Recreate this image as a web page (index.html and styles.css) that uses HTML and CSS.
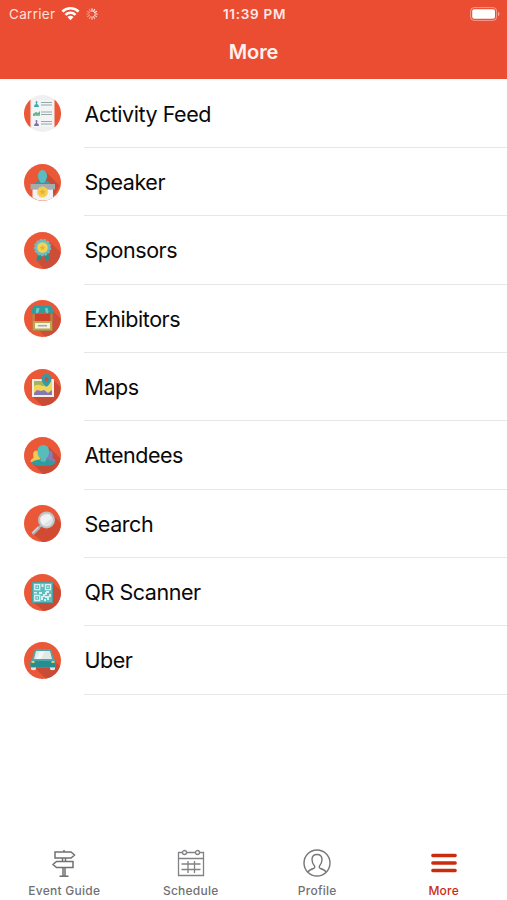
FILE: index.html
```html
<!DOCTYPE html>
<html lang="en">
<head>
    <meta charset="UTF-8">
    <meta name="viewport" content="width=device-width, initial-scale=1.0">
    <title>More</title>
    <link rel="stylesheet" href="styles.css">
</head>
<body>
    <header class="header">
        <div class="status-bar">
            <div class="carrier">
                <span>Carrier</span>
                <svg class="wifi" viewBox="0 0 20 15" fill="none" stroke="#fff" stroke-width="2.8">
                    <path d="M1.5 5.5a12 12 0 0 1 17 0M4.7 8.9a7.5 7.5 0 0 1 10.6 0"/>
                    <path d="M10 14.5L6.8 11.3a4.6 4.6 0 0 1 6.4 0z" fill="#fff" stroke="none"/>
                </svg>
                <svg class="spinner" viewBox="0 0 12 12" stroke="#fff" stroke-width="1.2" stroke-linecap="round">
                    <path d="M6 .8v2.4M8.6 1.5L7.5 3.4M10.5 3.4l-1.9 1.1M11.2 6H8.8" opacity=".9"/>
                    <path d="M10.5 8.6L8.6 7.5M8.6 10.5L7.5 8.6M6 11.2V8.8" opacity=".7"/>
                    <path d="M3.4 10.5l1.1-1.9M1.5 8.6l1.9-1.1M.8 6h2.4M1.5 3.4l1.9 1.1M3.4 1.5l1.1 1.9" opacity=".4"/>
                </svg>
            </div>
            <div class="time">11:39 PM</div>
            <svg class="battery" viewBox="0 0 30 14">
                <rect x=".6" y=".6" width="26" height="12.8" rx="3.5" fill="none" stroke="#fff" stroke-opacity=".45"/>
                <rect x="2.2" y="2.2" width="22.8" height="9.6" rx="2" fill="#fff"/>
                <path d="M28 4.8c2 .8 2 3.6 0 4.4z" fill="#fff" opacity=".5"/>
            </svg>
        </div>
        <h1 class="title">More</h1>
    </header>

    <ul class="menu">
        <li class="menu-item">
            <svg class="icon" viewBox="0 0 37 37">
                <circle cx="18.5" cy="18.5" r="18.5" fill="#f0f0f2"/>
                <path d="M6.5 4.4a18.5 18.5 0 0 0 0 28.2zM30.5 4.4a18.5 18.5 0 0 1 0 28.2z" fill="#eb5838"/>
                <path d="M8 5h21v27H8z" fill="#f3f4f6"/>
                <path d="M17 7.5h11M17 10h11M17 17h11M17 19.500h11M17 26.500h11M17 29h11" stroke="#93aaa8" stroke-width="1.2"/>
                <path d="M10 12q0-2.5 2-3-1-3 .5-3t.5 3q2 .5 2 3z" fill="#3cacae"/>
                <path d="M9 21v-2l3-2 2 1 2-2v5z" fill="#4fb5a0"/>
                <path d="M9 21l3-2 2 1 2-1v2z" fill="#a5c64f"/>
                <path d="M10 31q0-2.5 2-3-1-3 .5-3t.5 3q2 .5 2 3z" fill="#7d70ad"/>
            </svg>
            <span class="label">Activity Feed</span>
        </li>
        <li class="menu-item">
            <svg class="icon" viewBox="0 0 37 37">
                <circle cx="18.5" cy="18.5" r="18.5" fill="#eb5838"/>
                <path d="M21 7l14.5 14.5-5 9-14-12z" fill="#c94a35"/>
                <path d="M10.5 20q0-3 6-4h4q6 1 6 4z" fill="#40969b"/>
                <ellipse cx="18.5" cy="12" rx="4.6" ry="6" fill="#57bdc3"/>
                <path d="M16 15h5v3q-2.5 2-5 0z" fill="#57bdc3"/>
                <path d="M6.5 20H31v5.500H6.5z" fill="#a7abad"/>
                <path d="M8.5 25.500H29v8.200a18.5 18.5 0 0 1-20.500 0z" fill="#f1f2f3"/>
                <circle cx="18.5" cy="28" r="5.2" fill="#f5cd4d" stroke="#f7d866" stroke-dasharray="1.5 1"/>
                <path d="M18.5 25l1 2 2 .2-1.500 1.500.4 2-1.900-1-1.900 1 .4-2-1.500-1.500 2-.2z" fill="#e5b13c"/>
            </svg>
            <span class="label">Speaker</span>
        </li>
        <li class="menu-item">
            <svg class="icon" viewBox="0 0 37 37">
                <circle cx="18.5" cy="18.5" r="18.5" fill="#eb5838"/>
                <path d="M26 10l10.700 10.500A18.5 18.5 0 0 1 20 37l-7-8 9-10z" fill="#cc4d38"/>
                <path d="M14 21l4 2-2 6-2-1-2 1zM20 23l4-2 2 8-2-1-2 1z" fill="#298f8e"/>
                <circle cx="18.5" cy="15.5" r="7.7" fill="#6abfc3" stroke="#6abfc3" stroke-width="2" stroke-dasharray="2.5 1.2"/>
                <circle cx="18.5" cy="15.5" r="5.3" fill="#f5d352"/>
                <path d="M18.5 13l.8 1.700 1.900.2-1.400 1.300.4 1.900-1.700-.9-1.700.9.4-1.900-1.400-1.300 1.900-.2z" fill="#e5ad3e"/>
            </svg>
            <span class="label">Sponsors</span>
        </li>
        <li class="menu-item">
            <svg class="icon" viewBox="0 0 37 37">
                <circle cx="18.5" cy="18.5" r="18.5" fill="#eb5838"/>
                <path d="M27 9l9.900 10A18.5 18.5 0 0 1 21 36.800L15 30z" fill="#cc4d38"/>
                <path d="M9.500 13v17h18V13" fill="none" stroke="#a78c46" stroke-width="2"/>
                <path d="M11 14h15v7H11z" fill="#cf4229"/>
                <path d="M9 21h19v9H9z" fill="#b9a64f"/>
                <path d="M11 23h15v5.500H11z" fill="#f5f1e7"/>
                <path d="M14 25.700h9" stroke="#98a9ac" stroke-width="1.5"/>
                <path d="M9.500 6h18l2 6q-.5 2-2.300 2T25 12q-.5 2-2.200 2t-2.200-2q-.5 2-2.200 2t-2.200-2q-.5 2-2.200 2t-2.200-2q-.5 2-2.200 2T7 12z" fill="#2b9e9f"/>
                <path d="M12.500 8l-.8 4q1 2.500 3 0l.8-4zM21 8l.5 4q1.500 2.500 3 0l-.8-4z" fill="#71c8c5"/>
            </svg>
            <span class="label">Exhibitors</span>
        </li>
        <li class="menu-item">
            <svg class="icon" viewBox="0 0 37 37">
                <circle cx="18.5" cy="18.5" r="18.5" fill="#eb5838"/>
                <path d="M29 11l7.500 7.500A18.5 18.5 0 0 1 18.500 37L9 28z" fill="#c94a35"/>
                <path d="M8 10h22v18H8z" fill="#f3efe8"/>
                <path d="M10 12h18v14H10z" fill="#f4d45b"/>
                <path d="M10 12h15v4q-6 2-9 0-3-1-6 1z" fill="#a8b45a"/>
                <path d="M10 24l3-3 4 1 3-1 4 3 4-3v5H10z" fill="#8279b7"/>
                <path d="M22.500 18q-5-4.500-5-8a5 5 0 0 1 10 0q0 3.500-5 8z" fill="#339ca1"/>
                <circle cx="22.500" cy="10" r="2" fill="#cf503f"/>
            </svg>
            <span class="label">Maps</span>
        </li>
        <li class="menu-item">
            <svg class="icon" viewBox="0 0 37 37">
                <circle cx="18.5" cy="18.5" r="18.5" fill="#eb5838"/>
                <path d="M25 10l11.500 11.500A18.5 18.5 0 0 1 19 37L9 27z" fill="#c94a35"/>
                <path d="M6.500 25q0-3 3-4-1.500-7 2.500-7.500 4.500 0 4.500 6l-1 5.500z" fill="#f2c94d"/>
                <path d="M31.500 25q0-3-3-4 1.500-7-2.500-7.500-4.500 0-4.500 6l1 5.500z" fill="#887bb5"/>
                <path d="M7 26.500q1-3 8-4h7.500q8 1 9 4-4 2.500-12 2.500T7 26.500z" fill="#319c9e"/>
                <path d="M19.300 8q5.700 0 5.700 6.500 0 4.500-3 7v2.500q-2.700 1.500-5.500 0v-2.500q-3-2.500-3-7 0-6.500 5.800-6.500z" fill="#57bdbb"/>
            </svg>
            <span class="label">Attendees</span>
        </li>
        <li class="menu-item">
            <svg class="icon" viewBox="0 0 37 37">
                <circle cx="18.5" cy="18.5" r="18.5" fill="#eb5838"/>
                <path d="M29 10l8 8A18.5 18.5 0 0 1 19 37l-10-8 10-9z" fill="#d14a31"/>
                <path d="M17.500 20L14 23.500" stroke="#b6b9b9" stroke-width="2"/>
                <path d="M14.500 23L9.500 28" stroke="#a9acad" stroke-width="3.5" stroke-linecap="round"/>
                <path d="M14 22.500L9 27.500" stroke="#d9dcdc" stroke-width="1.2" stroke-linecap="round"/>
                <circle cx="22.500" cy="15" r="7.5" fill="#e1e4e5" stroke="#bec1c1" stroke-width="2"/>
                <path d="M17 12l8-3 3 4-9 7q-3-3-2-8z" fill="#f0f2f3"/>
            </svg>
            <span class="label">Search</span>
        </li>
        <li class="menu-item">
            <svg class="icon" viewBox="0 0 37 37">
                <circle cx="18.5" cy="18.5" r="18.5" fill="#eb5838"/>
                <path d="M29 9l7.900 8A18.5 18.5 0 0 1 20 37L9 28z" fill="#c94a35"/>
                <path d="M8.500 8.500h20v20h-20z" fill="#60bdbe" stroke="#48a2a4"/>
                <path d="M10.700 10.700h5v5h-5zM21.500 10.700h5v5h-5zM10.700 21.500h5v5h-5z" fill="none" stroke="#daf0ef" stroke-width="1.300"/>
                <path d="M12.500 12.500H14V14h-1.500zM23.200 12.500h1.500V14h-1.500zM12.500 23.200H14v1.500h-1.500zM17.500 10h2v3h-2zM22 17h3v2h-2v2h-2v2h-2v3h-2v-4h2v-2h2v-2h1zM25 20h2v3h-2v3h-2v-2h-2v-2h4zM10 18h3v1.500h-3zM15 18h3v2h-3zM20 25h2v2h-2z" fill="#daf0ef"/>
            </svg>
            <span class="label">QR Scanner</span>
        </li>
        <li class="menu-item">
            <svg class="icon" viewBox="0 0 37 37">
                <circle cx="18.5" cy="18.5" r="18.5" fill="#eb5838"/>
                <path d="M31 20l5 4A18.5 18.5 0 0 1 22 36.700L10 25z" fill="#c94a35"/>
                <path d="M7 24h5v3.500q-2.500 1.500-5 0zM26 24h5v3.500q-2.500 1.500-5 0z" fill="#dfe5e5"/>
                <path d="M12 7h14q1 0 1.500 2l2.500 8q1.500 1 1.500 3v4.500q0 1-1 1h-23q-1 0-1-1V20q0-2 1.500-3L10.500 9q.5-2 1.500-2z" fill="#48a6ac"/>
                <path d="M6.500 19h25v5q0 1-1 1h-23q-1 0-1-1z" fill="#248e92"/>
                <path d="M12.500 9h13q.5 0 1 2l1.500 6H10l1.500-6q.5-2 1-2z" fill="#e3e7e7"/>
                <path d="M16 9h5l-4 8h-5z" fill="#f4f5f5"/>
                <path d="M7.500 19h3v2h-3zM27.500 19h3v2h-3z" fill="#e4d05c"/>
            </svg>
            <span class="label">Uber</span>
        </li>
    </ul>

    <nav class="tab-bar">
        <a class="tab">
            <svg class="tab-icon" viewBox="0 0 28 28" fill="none" stroke="#707073" stroke-width="1.5">
                <path d="M5 3h16l3.500 3L21 9H5zM23 12.500H6.500l-3.500 3 3.500 3H23zM12.500 9v3.500M15.500 9v3.500M13 18.500V27M15 18.500V27M9.500 27.300h9"/>
                <path d="M14 1v2"/>
            </svg>
            <span>Event Guide</span>
        </a>
        <a class="tab">
            <svg class="tab-icon" viewBox="0 0 28 28" fill="none" stroke="#828285" stroke-width="1.300">
                <path d="M5.500 3.500h-4v23h25v-23h-4M9.500 3.500h9M1.500 9.500h25M4.500 15h19M4.500 20.500h19M11 12v12M17.500 12v12"/>
                <circle cx="7.5" cy="3.5" r="2"/>
                <circle cx="20.500" cy="3.500" r="2"/>
            </svg>
            <span>Schedule</span>
        </a>
        <a class="tab">
            <svg class="tab-icon" viewBox="0 0 28 28" fill="none" stroke="#77777a" stroke-width="1.400">
                <circle cx="14" cy="14" r="13"/>
                <path d="M5 23q1-2 5.500-3.500 1.800-.7 1-2.500Q9 14 9 10.500 9 5.500 14 5.500t5 5q0 3.500-2.500 6.500-.8 1.800 1 2.500Q22 21 23 23"/>
            </svg>
            <span>Profile</span>
        </a>
        <a class="tab active">
            <svg class="tab-icon" viewBox="0 0 28 28" stroke="#ca2c0e" stroke-width="3.3" stroke-linecap="round">
                <path d="M2.800 6.500h22.400M2.800 14h22.400M2.800 21.500h22.400"/>
            </svg>
            <span>More</span>
        </a>
    </nav>
</body>
</html>
```
FILE: styles.css
```css
* {
    box-sizing: border-box;
}
body {
    margin: 0;
    height: 100vh;
    display: flex;
    flex-direction: column;
    background: #fff;
    color: #090909;
    font-family: Inter, "Liberation Sans", sans-serif;
    overflow: hidden;
}
.header {
    height: 79px;
    flex-shrink: 0;
    background: #eb4d32;
    color: #fff;
}
.status-bar {
    height: 27px;
    padding: 0 7px 0 9px;
    display: grid;
    grid-template-columns: 1fr auto 1fr;
    align-items: center;
    font-size: 13.5px;
}
.carrier {
    display: flex;
    align-items: center;
    gap: 6px;
    color: #ffe0d9;
    letter-spacing: 0.3px;
}
.wifi {
    width: 19px;
    height: 15px;
}
.spinner {
    width: 12px;
    height: 12px;
}
.time {
    font-weight: 600;
    font-size: 13.5px;
    color: #ffeae5;
    letter-spacing: 0.7px;
}
.battery {
    width: 30px;
    height: 14px;
    justify-self: end;
}
.title {
    margin: 0;
    line-height: 51px;
    text-align: center;
    font-size: 20px;
    font-weight: 600;
    letter-spacing: -0.1px;
    color: #fff1ed;
}
.menu {
    list-style: none;
    margin: 0;
    padding: 0.6px 0 0;
}
.menu-item {
    height: 68.37px;
    padding-left: 24px;
    display: flex;
    align-items: center;
    gap: 23px;
}
.icon {
    width: 37px;
    height: 37px;
    flex-shrink: 0;
}
.label {
    flex: 1;
    height: 100%;
    padding-left: 0.5px;
    line-height: 69px;
    border-bottom: 1.5px solid #e7e7e9;
    font-size: 21.5px;
    letter-spacing: -0.45px;
}
.tab-bar {
    margin-top: auto;
    height: 53px;
    padding-left: 1px;
    display: grid;
    grid-template-columns: repeat(4, 1fr);
}
.tab {
    display: flex;
    flex-direction: column;
    align-items: center;
    gap: 6px;
    font-size: 12px;
    font-weight: 500;
    line-height: 15px;
    letter-spacing: 0.25px;
    color: #717174;
}
.tab-icon {
    width: 28px;
    height: 28px;
    margin-top: 2px;
}
.active {
    color: #ca2c0e;
}
```
